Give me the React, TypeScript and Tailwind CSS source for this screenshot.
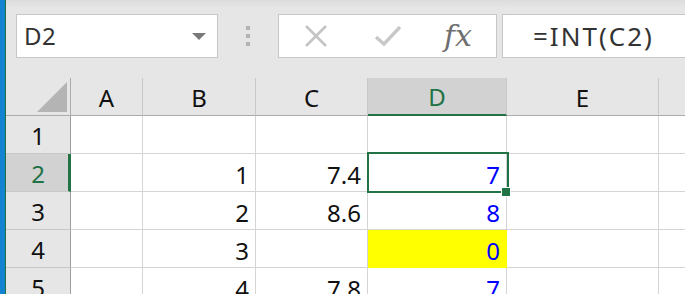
import React from 'react';

const font = { fontFamily: '"Noto Sans", "Open Sans", sans-serif' };

const cols = [
  { name: 'A', w: 'w-[72px]' },
  { name: 'B', w: 'w-[113px]' },
  { name: 'C', w: 'w-[112px]' },
  { name: 'D', w: 'w-[139px]' },
  { name: 'E', w: 'w-[152px]' },
];

const rows: { n: number; b?: string; c?: string; d?: string }[] = [
  { n: 1 },
  { n: 2, b: '1', c: '7.4', d: '7' },
  { n: 3, b: '2', c: '8.6', d: '8' },
  { n: 4, b: '3', d: '0' },
  { n: 5, b: '4', c: '7.8', d: '7' },
];

function Toolbar() {
  return (
    <div className="h-[78px] shrink-0 flex items-start pt-[14px] pl-[10px] bg-gradient-to-b from-[#dcdcdc] via-[#e6e6e6] via-10% to-[#e6e6e6]">
      <div className="w-[202px] h-[44px] bg-white border border-[#c6c6c6] flex items-center justify-between pl-[7px] pr-[11px]">
        <span className="text-[24px] text-[#333] leading-none tracking-[0.5px]">D2</span>
        <span className="w-0 h-0 border-l-[7px] border-r-[7px] border-t-[7px] border-l-transparent border-r-transparent border-t-[#7a7a7a]" />
      </div>
      <div className="w-[60px] h-[44px] flex flex-col items-center justify-center gap-[4px]">
        <span className="w-[4px] h-[4px] bg-[#b4b4b4]" />
        <span className="w-[4px] h-[4px] bg-[#b4b4b4]" />
        <span className="w-[4px] h-[4px] bg-[#b4b4b4]" />
      </div>
      <div className="w-[219px] h-[44px] bg-white border border-[#c6c6c6] flex items-center">
        <svg width="24" height="22" viewBox="0 0 24 22" className="ml-[25px]">
          <path d="M2 1 L22 21 M22 1 L2 21" stroke="#c4c4c4" strokeWidth="2.6" fill="none" />
        </svg>
        <svg width="26" height="20" viewBox="0 0 26 20" className="ml-[47px]">
          <path d="M1 11 L9 18 L25 1" stroke="#c8c8c8" strokeWidth="3.4" fill="none" />
        </svg>
        <span
          className="ml-[43px] text-[30px] italic text-[#6f6f6f] leading-none"
          style={{ fontFamily: '"DejaVu Serif", "Liberation Serif", serif' }}
        >
          fx
        </span>
      </div>
      <div className="ml-[5px] flex-1 h-[44px] bg-white border border-[#c6c6c6] border-r-0 flex items-center pl-[30px]">
        <span className="text-[26px] text-[#333] leading-none tracking-[2px]">=INT(C2)</span>
      </div>
    </div>
  );
}

function HeaderRow() {
  return (
    <div className="flex h-[38px] shrink-0 bg-[#e6e6e6]">
      <div className="w-[65px] shrink-0 border-r border-b border-[#ababab] flex items-end justify-end pr-[3px] pb-[3px]">
        <div className="w-[30px] h-[30px] bg-[#b4b4b4] [clip-path:polygon(100%_0,100%_100%,0_100%)]" />
      </div>
      {cols.map((c) => (
        <div
          key={c.name}
          className={`${c.w} shrink-0 border-b flex items-center justify-center text-[24px] leading-none pt-[2px] ${
            c.name === 'D'
              ? 'bg-[#d2d2d2] text-[#217346] border-b-2 border-b-[#217346] border-r border-r-[#c8c8c8]'
              : 'text-[#111] border-b-[#ababab] border-r border-r-[#c8c8c8]'
          }`}
        >
          {c.name}
        </div>
      ))}
      <div className="flex-1 border-b border-[#ababab]" />
    </div>
  );
}

function Cell({ w, v, blue, yellow }: { w: string; v?: string; blue?: boolean; yellow?: boolean }) {
  return (
    <div
      className={`${w} shrink-0 border-r border-b flex items-end justify-end pr-[6px] pb-[4px] text-[24px] leading-none ${
        yellow ? 'bg-[#ffff00] border-[#ffff00]' : 'bg-white border-[#d4d4d4]'
      } ${blue ? 'text-[#0000ff]' : 'text-[#111]'}`}
    >
      {v}
    </div>
  );
}

export default function App() {
  return (
    <div className="w-[685px] h-[294px] overflow-hidden flex bg-[#e6e6e6]" style={font}>
      <div className="w-[5px] shrink-0 bg-[#1383d0]" />
      <div className="w-[1px] shrink-0 bg-[#1e7145]" />
      <div className="flex-1 flex flex-col relative">
        <Toolbar />
        <HeaderRow />
        {rows.map((r) => {
          const sel = r.n === 2;
          return (
            <div key={r.n} className="flex h-[38px] shrink-0">
              <div
                className={`w-[65px] shrink-0 border-b border-[#c8c8c8] flex items-center justify-center text-[24px] leading-none pt-[2px] ${
                  sel
                    ? 'bg-[#d2d2d2] text-[#217346] border-r-[3px] border-r-[#217346] pl-[2px]'
                    : 'bg-[#e6e6e6] text-[#111] border-r border-r-[#9f9f9f]'
                }`}
              >
                {r.n}
              </div>
              <Cell w="w-[72px]" />
              <Cell w="w-[113px]" v={r.b} />
              <Cell w="w-[112px]" v={r.c} />
              <Cell w="w-[139px]" v={r.d} blue yellow={r.n === 4} />
              <Cell w="w-[152px]" />
              <div className="flex-1 bg-white border-b border-[#d4d4d4]" />
            </div>
          );
        })}
        <div className="absolute left-[361px] top-[152px] w-[142px] h-[41px] border-2 border-[#217346]" />
        <div className="absolute left-[496px] top-[188px] w-[8px] h-[8px] bg-[#217346] outline outline-1 outline-white" />
      </div>
    </div>
  );
}
